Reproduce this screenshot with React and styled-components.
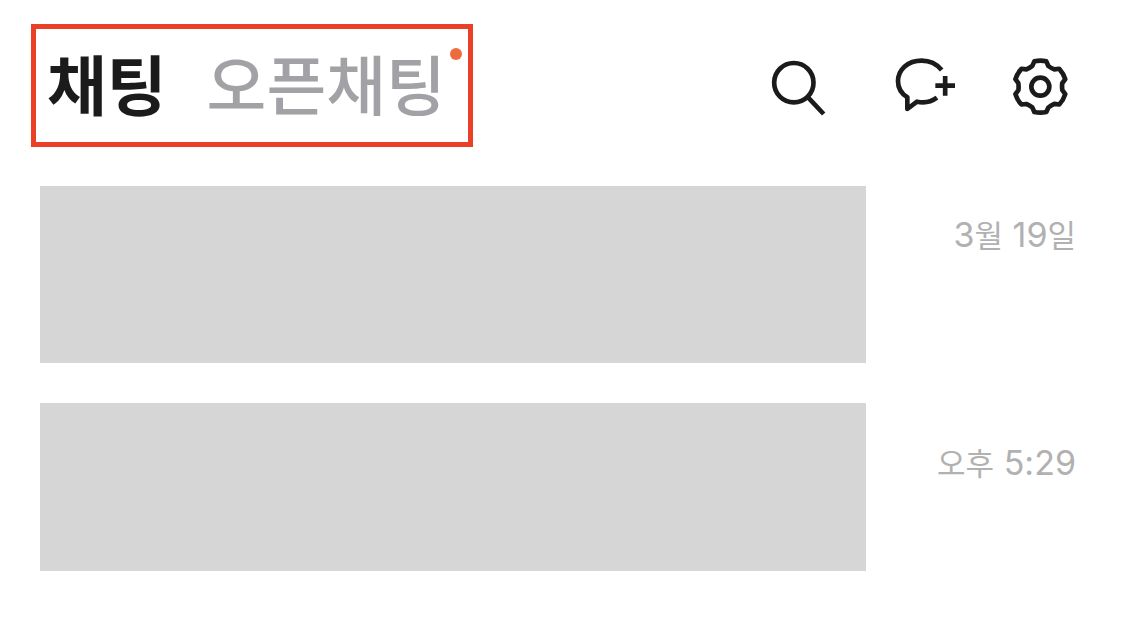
import React from "react";
import styled, { createGlobalStyle } from "styled-components";

const GlobalStyle = createGlobalStyle`
  * { box-sizing: border-box; }
  body {
    margin: 0;
    background: #fff;
    font-family: Inter, "Noto Sans CJK KR", sans-serif;
  }
`;

const Page = styled.main`
  padding: 24px 49px 40px 40px;
`;

const Header = styled.header`
  display: flex;
  align-items: center;
  justify-content: space-between;
  margin: 0 0 39px -9px;
`;

const Tabs = styled.nav`
  display: flex;
  align-items: center;
  gap: 40px;
  height: 123px;
  padding: 0 22px 8px 11px;
  border: 5px solid #ea4028;
`;

const Tab = styled.button`
  position: relative;
  padding: 0;
  border: 0;
  background: none;
  color: ${(p) => (p.$active ? "#1b1b1b" : "#a2a1a6")};
  font-family: "Noto Sans CJK KR", sans-serif;
  font-size: 65px;
  font-weight: ${(p) => (p.$active ? 700 : 500)};
  line-height: 96px;
  white-space: nowrap;
  cursor: pointer;
`;

const NewDot = styled.span`
  position: absolute;
  top: 14px;
  right: -16px;
  width: 12px;
  height: 12px;
  border-radius: 50%;
  background: #ed6b3c;
`;

const Actions = styled.div`
  display: flex;
  gap: 48px;
`;

const IconButton = styled.button`
  display: flex;
  padding: 0;
  border: 0;
  background: none;
  color: #1b1b1b;
  cursor: pointer;
`;

const Icon = styled.svg`
  width: 72px;
  height: 60px;
  fill: none;
  stroke: currentColor;
  stroke-width: 14;
`;

const ChatList = styled.ul`
  display: flex;
  flex-direction: column;
  gap: 40px;
  margin: 0;
  padding: 0;
  list-style: none;
`;

const ChatRow = styled.li`
  display: flex;
  justify-content: space-between;
  height: ${(p) => p.$height}px;
`;

const Preview = styled.div`
  flex: 1;
  background: #d6d6d6;
`;

const Time = styled.time`
  width: 210px;
  padding-top: ${(p) => p.$top}px;
  color: #b1b1b1;
  font-size: 34px;
  font-weight: 400;
  line-height: 46px;
  text-align: right;
  white-space: nowrap;
`;

const Hangul = styled.span`
  font-family: "Noto Sans CJK KR", sans-serif;
  font-size: 31px;
`;

function gearPath() {
  const cx = 121;
  const cy = 125;
  const at = (x, y, deg) => {
    const a = (deg * Math.PI) / 180;
    const px = cx + x * Math.cos(a) - y * Math.sin(a);
    const py = cy + x * Math.sin(a) + y * Math.cos(a);
    return `${px.toFixed(1)} ${py.toFixed(1)}`;
  };
  let d = "";
  for (let deg = 0; deg < 360; deg += 60) {
    d += `${deg ? "L" : "M"}${at(-18, -76, deg)}`;
    d += `Q${at(0, -80, deg)} ${at(18, -76, deg)}`;
    d += `L${at(24, -62, deg)}Q${at(32, -56, deg)} ${at(42, -52, deg)}`;
  }
  return d + "Z";
}

function SearchIcon() {
  return (
    <Icon viewBox="12 33 216 180" aria-hidden="true">
      <circle cx="101.500" cy="113" r="59" />
      <path d="M142 155L191 207" />
    </Icon>
  );
}

function NewChatIcon() {
  return (
    <Icon viewBox="12 33 216 180" aria-hidden="true">
      <path
        strokeLinejoin="round"
        d="M185 75C170 57 149 47 125 47C84 47 54 73 54 109C54 129 64 146 82 157V192L111 170C132 175 153 171 171 158"
      />
      <path d="M166 122H225M195.500 93V152" />
    </Icon>
  );
}

function SettingsIcon() {
  return (
    <Icon viewBox="12 33 216 180" aria-hidden="true">
      <path strokeLinejoin="round" d={gearPath()} />
      <circle cx="121" cy="125" r="27" />
    </Icon>
  );
}

const actions = [
  { label: "검색", Glyph: SearchIcon },
  { label: "새로운 채팅", Glyph: NewChatIcon },
  { label: "설정", Glyph: SettingsIcon },
];

export default function App() {
  return (
    <>
      <GlobalStyle />
      <Page>
        <Header>
          <Tabs>
            <Tab type="button" $active>채팅</Tab>
            <Tab type="button">
              오픈채팅
              <NewDot />
            </Tab>
          </Tabs>
          <Actions>
            {actions.map(({ label, Glyph }) => (
              <IconButton key={label} type="button" aria-label={label}>
                <Glyph />
              </IconButton>
            ))}
          </Actions>
        </Header>
        <ChatList>
          <ChatRow $height={177}>
            <Preview />
            <Time $top={25}>
              3<Hangul>월</Hangul> 19<Hangul>일</Hangul>
            </Time>
          </ChatRow>
          <ChatRow $height={168}>
            <Preview />
            <Time $top={36}>
              <Hangul>오후</Hangul> 5:29
            </Time>
          </ChatRow>
        </ChatList>
      </Page>
    </>
  );
}
